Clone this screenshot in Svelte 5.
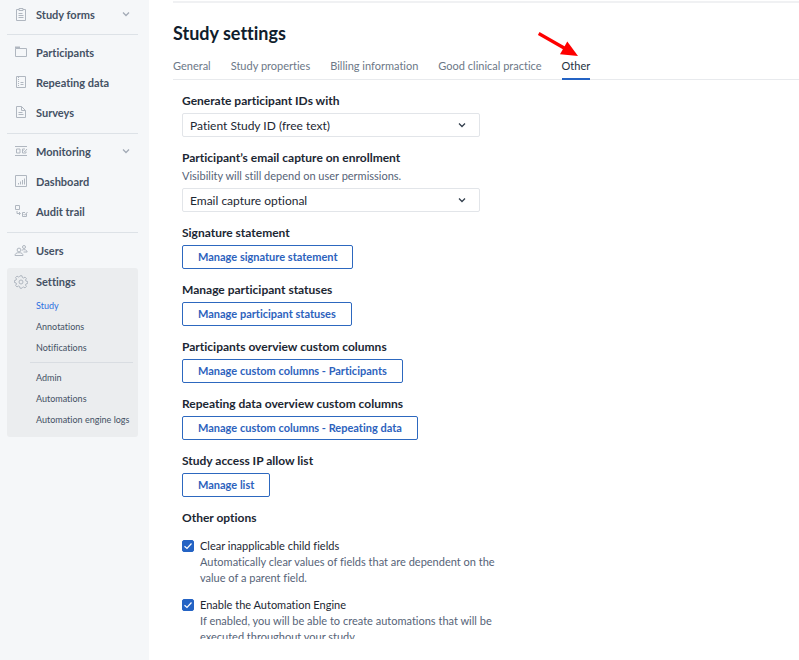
<script>
  const menu = [
    [{ label: 'Study forms', icon: 'clipboard', expandable: true }],
    [
      { label: 'Participants', icon: 'folder' },
      { label: 'Repeating data', icon: 'notebook' },
      { label: 'Surveys', icon: 'file' }
    ],
    [
      { label: 'Monitoring', icon: 'monitoring', expandable: true },
      { label: 'Dashboard', icon: 'chart' },
      { label: 'Audit trail', icon: 'trail' }
    ],
    [{ label: 'Users', icon: 'users' }]
  ];

  const subMenu = [
    ['Study', 'Annotations', 'Notifications'],
    ['Admin', 'Automations', 'Automation engine logs']
  ];

  const tabs = ['General', 'Study properties', 'Billing information', 'Good clinical practice', 'Other'];

  const actions = [
    { title: 'Signature statement', button: 'Manage signature statement' },
    { title: 'Manage participant statuses', button: 'Manage participant statuses' },
    { title: 'Participants overview custom columns', button: 'Manage custom columns - Participants' },
    { title: 'Repeating data overview custom columns', button: 'Manage custom columns - Repeating data' },
    { title: 'Study access IP allow list', button: 'Manage list' }
  ];

  let activePage = $state('Study');
  let activeTab = $state('Other');
  let idType = $state('free');
  let emailCapture = $state('optional');

  let options = $state([
    {
      id: 'clear-fields',
      label: 'Clear inapplicable child fields',
      hint: 'Automatically clear values of fields that are dependent on the value of a parent field.',
      checked: true
    },
    {
      id: 'automation-engine',
      label: 'Enable the Automation Engine',
      hint: 'If enabled, you will be able to create automations that will be executed throughout your study.',
      checked: true
    }
  ]);
</script>

{#snippet chevron()}
  <svg class="chevron" viewBox="0 0 8 8" aria-hidden="true">
    <path d="M1 2.5 4 5.5 7 2.5" />
  </svg>
{/snippet}

{#snippet icon(name)}
  <svg class="icon" viewBox="0 0 14 14" aria-hidden="true">
    {#if name === 'clipboard'}
      <path d="M5 2.5H2.5v11h9v-11H9M5 1.500h4v2H5zM4.5 6.500h4M4.5 8.500h5M4.5 10.500h5" />
    {:else if name === 'folder'}
      <path d="M1.5 11.500v-8h11v8z" />
      <path d="M1 2.500h5" stroke-width="2" />
    {:else if name === 'notebook'}
      <path d="M2.5 1.500h9v11h-9z" />
      <path d="M4.500 2v10" stroke-dasharray="1 1" />
      <path d="M6.500 7.500h3M6.500 9.500h3" />
    {:else if name === 'file'}
      <path d="M2.5 1.500h5l4 4v7h-9zM7.500 1.500v4h4M4.500 7.500h4M4.500 9.500h5" />
    {:else if name === 'monitoring'}
      <path d="M1 2.500h12M1 11.500h12M2.500 5h3.500v4H2.500zM12 7.500V9H8.500V5H11M9.500 6.500l1.200 1.200L13 5" />
    {:else if name === 'chart'}
      <path d="M1.500 1.500h11v11h-11z" />
      <path d="M4.500 10.500V9M6.500 10.500v-3M8.500 10.500V6M10.500 10.500V4.500" />
    {:else if name === 'trail'}
      <path d="M1.500 1.500h4v4h-4zM3 7v2.500h3M5 8l1.500 1.500L5 11M12.500 9.500v3h-4v-4H11M9.500 10l1.200 1.200L13.500 8" />
    {:else if name === 'users'}
      <circle cx="5" cy="7" r="1.900" />
      <circle cx="10" cy="4" r="1.500" />
      <path d="M1 12.500c0-2 1.500-2.800 4-2.800s4 .8 4 2.800zM7.800 7.200c2.500-1.200 5-.5 5.400 1.800H9.500" />
    {:else if name === 'gear'}
      <path
        d="M6 .8h2l.4 1.700 1.100.5 1.500-.9 1.400 1.400-.9 1.500.5 1.100 1.700.4v2l-1.700.4-.5 1.100.9 1.500-1.400 1.400-1.500-.9-1.100.5L8 13.200H6l-.4-1.700-1.100-.5-1.500.9L1.600 10.500l.9-1.500L2 7.900.4 7.500v-2L2 5.100 2.500 4l-.9-1.500L3 1.100l1.500.9 1.100-.5z"
      />
      <circle cx="7" cy="7" r="2" />
    {/if}
  </svg>
{/snippet}

<div class="page">
  <nav class="sidebar" aria-label="Study">
    {#each menu as group}
      <ul class="group">
        {#each group as item}
          <li>
            <a class="item" href="#{item.icon}">
              {@render icon(item.icon)}
              <span>{item.label}</span>
              {#if item.expandable}
                {@render chevron()}
              {/if}
            </a>
          </li>
        {/each}
      </ul>
    {/each}

    <div class="settings">
      <a class="item" href="#settings">
        {@render icon('gear')}
        <span>Settings</span>
      </a>
      {#each subMenu as group}
        <ul class="sub-group">
          {#each group as label}
            <li>
              <a
                class="sub-item"
                class:active={activePage === label}
                href="#settings"
                onclick={() => (activePage = label)}
              >
                {label}
              </a>
            </li>
          {/each}
        </ul>
      {/each}
    </div>
  </nav>

  <main>
    <header>
      <h1>Study settings</h1>
    </header>

    <div class="tabs" role="tablist">
      {#each tabs as tab}
        <button
          class="tab"
          class:active={activeTab === tab}
          role="tab"
          aria-selected={activeTab === tab}
          onclick={() => (activeTab = tab)}
        >
          {tab}
        </button>
      {/each}
      <svg class="pointer" viewBox="0 0 42 26" aria-hidden="true">
        <path d="M1.700 2.500 28 17.500" stroke="#fe0000" stroke-width="3.200" />
        <path d="M30.300 10.500 41 25 23 23.300z" fill="#fe0000" />
      </svg>
    </div>

    <div class="content">
      <div class="field">
        <label class="title" for="id-type">Generate participant IDs with</label>
        <div class="select">
          <select id="id-type" bind:value={idType}>
            <option value="free">Patient Study ID (free text)</option>
          </select>
          {@render chevron()}
        </div>
      </div>

      <div class="field">
        <label class="title" for="email-capture">Participant’s email capture on enrollment</label>
        <p class="hint">Visibility will still depend on user permissions.</p>
        <div class="select">
          <select id="email-capture" bind:value={emailCapture}>
            <option value="optional">Email capture optional</option>
          </select>
          {@render chevron()}
        </div>
      </div>

      {#each actions as action}
        <div class="field">
          <h2 class="title">{action.title}</h2>
          <button class="outline">{action.button}</button>
        </div>
      {/each}

      <h2 class="title">Other options</h2>
      {#each options as option}
        <div class="option">
          <span class="check">
            <input type="checkbox" id={option.id} bind:checked={option.checked} />
            {#if option.checked}
              <svg viewBox="0 0 12 12" aria-hidden="true">
                <path d="M2.500 6.200 5 8.500 9.500 3.500" />
              </svg>
            {/if}
          </span>
          <div>
            <label for={option.id}>{option.label}</label>
            <p class="hint">{option.hint}</p>
          </div>
        </div>
      {/each}
    </div>
  </main>
</div>

<style>
  :global(body) {
    margin: 0;
  }

  .page {
    display: flex;
    height: 100vh;
    overflow: hidden;
    background: #fff;
    color: #182433;
    font-family: Lato, 'Liberation Sans', sans-serif;
    font-size: 11px;
    font-variant-ligatures: none;
  }

  ul,
  p,
  h1,
  h2 {
    margin: 0;
    padding: 0;
  }

  ul {
    list-style: none;
  }

  a {
    text-decoration: none;
  }

  button,
  select {
    font-family: inherit;
    font-variant-ligatures: inherit;
  }

  /* Sidebar */
  .sidebar {
    flex: 0 0 131px;
    padding: 0 11px 0 7px;
    background: #f5f7f9;
  }

  .group {
    padding: 2px 0 6px;
    border-bottom: 1px solid #dde2e7;
  }

  .group:first-child {
    padding-top: 0;
  }

  .group:nth-child(4) {
    padding-bottom: 3px;
    border-bottom: 0;
  }

  .item {
    display: flex;
    align-items: center;
    height: 30px;
    padding: 0 8px 0 7px;
    color: #445164;
    font-size: 11px;
    font-weight: 700;
  }

  .group:first-child .item {
    height: 28px;
  }

  .item span {
    flex: 1;
    margin-left: 8px;
  }

  .icon {
    width: 14px;
    height: 14px;
    fill: none;
    stroke: #b0b7c0;
    stroke-width: 1;
  }

  .chevron {
    width: 8px;
    height: 8px;
    fill: none;
    stroke: #333f4d;
    stroke-width: 1.3;
  }

  .item .chevron {
    stroke: #a3abb6;
  }

  .settings {
    padding-bottom: 7px;
    border-radius: 3px;
    background: #ebedef;
  }

  .settings .item {
    height: 27px;
  }

  .sub-group {
    margin-left: 23px;
    margin-right: 5px;
  }

  .sub-group + .sub-group {
    margin-top: 4px;
    padding-top: 4px;
    border-top: 1px solid #d9dde2;
  }

  .sub-item {
    display: block;
    padding-left: 6px;
    color: #445164;
    font-size: 9px;
    line-height: 21px;
    white-space: nowrap;
  }

  .sub-item.active {
    color: #2c6fe0;
  }

  /* Main column */
  main {
    flex: 1;
    min-width: 0;
    display: flex;
    flex-direction: column;
    padding: 1px 0 21px 24px;
    box-sizing: border-box;
  }

  header {
    border-top: 2px solid #f0f1f3;
    padding: 18px 0 13px;
  }

  h1 {
    font-size: 18px;
    line-height: 24px;
    font-weight: 700;
    color: #101d2c;
  }

  .tabs {
    position: relative;
    display: flex;
    gap: 20px;
    border-bottom: 1px solid #e8eaed;
  }

  .tab {
    margin-bottom: -1px;
    padding: 0 0 4px;
    border: 0;
    border-bottom: 2px solid transparent;
    background: none;
    color: #6c7887;
    font-size: 11px;
    line-height: 16px;
    white-space: nowrap;
    cursor: pointer;
  }

  .tab.active {
    border-bottom-color: #2463c4;
    color: #243142;
  }

  /* Pointer over the last tab */
  .pointer {
    position: absolute;
    left: 364px;
    top: -27px;
    width: 42px;
    height: 26px;
    fill: none;
  }

  .content {
    flex: 1;
    min-height: 0;
    overflow: hidden;
    padding: 13px 9px 0;
  }

  .field {
    margin-bottom: 13px;
  }

  .title {
    display: block;
    margin-bottom: 4px;
    font-size: 12px;
    line-height: 16px;
    font-weight: 700;
    color: #1c2733;
  }

  .hint {
    color: #566377;
    font-size: 11px;
    line-height: 16px;
  }

  .field .hint {
    margin: -2px 0 4px;
  }

  .select {
    position: relative;
    max-width: 298px;
  }

  .select select {
    display: block;
    width: 100%;
    height: 24px;
    padding: 0 24px 0 7px;
    border: 1px solid #e2e5e9;
    border-radius: 2px;
    appearance: none;
    background: #fff;
    color: #1c2733;
    font-size: 12px;
  }

  .select .chevron {
    position: absolute;
    right: 14px;
    top: 8px;
    pointer-events: none;
  }

  .outline {
    display: block;
    height: 24px;
    padding: 0 15px 2px;
    border: 1px solid #2d68bf;
    border-radius: 2px;
    background: #fff;
    color: #2d62bd;
    font-size: 11px;
    font-weight: 700;
    cursor: pointer;
  }

  .option {
    display: flex;
    gap: 6px;
    max-width: 320px;
    margin-bottom: 11px;
  }

  .title + .option {
    margin-top: 12px;
  }

  .option label {
    display: block;
    font-size: 11px;
    line-height: 16px;
    color: #1c2733;
  }

  .check {
    position: relative;
    flex: none;
    width: 12px;
    height: 12px;
    margin-top: 2px;
  }

  .check input {
    display: block;
    width: 12px;
    height: 12px;
    margin: 0;
    border: 1px solid #2463c4;
    border-radius: 2px;
    appearance: none;
    background: #fff;
  }

  .check input:checked {
    background: #2463c4;
  }

  .check svg {
    position: absolute;
    inset: 0;
    fill: none;
    stroke: #fff;
    stroke-width: 1.2;
    pointer-events: none;
  }
</style>
